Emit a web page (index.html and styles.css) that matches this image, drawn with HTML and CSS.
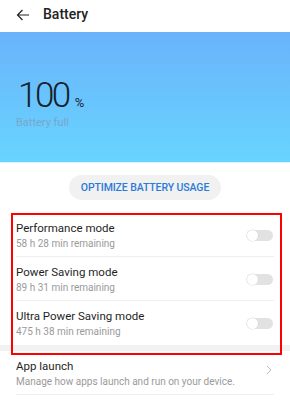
FILE: index.html
```html
<!DOCTYPE html>
<html>
<head>
<meta charset="utf-8">
<link rel="stylesheet" href="styles.css">
</head>
<body>
<div class="screen">
  <header class="topbar">
    <svg class="back" width="14" height="12" viewBox="0 0 14 12"><path d="M13 6H1.5M6.5 1L1.5 6l5 5" fill="none" stroke="#222" stroke-width="1.2"/></svg>
    <span class="title">Battery</span>
  </header>
  <section class="hero">
    <div class="level"><span class="num">100</span><span class="pct">%</span></div>
    <div class="status">Battery full</div>
  </section>
  <div class="action">
    <button class="optimize">OPTIMIZE BATTERY USAGE</button>
  </div>
  <section class="modes">
    <div class="row">
      <div class="text"><div class="name">Performance mode</div><div class="sub">58 h 28 min remaining</div></div>
      <span class="toggle"></span>
    </div>
    <div class="row">
      <div class="text"><div class="name">Power Saving mode</div><div class="sub">89 h 31 min remaining</div></div>
      <span class="toggle"></span>
    </div>
    <div class="row last">
      <div class="text"><div class="name">Ultra Power Saving mode</div><div class="sub">475 h 38 min remaining</div></div>
      <span class="toggle"></span>
    </div>
  </section>
  <section class="more">
    <div class="row link">
      <div class="text"><div class="name">App launch</div><div class="sub">Manage how apps launch and run on your device.</div></div>
      <svg class="chev" width="6" height="10" viewBox="0 0 6 10"><path d="M1 1l4 4-4 4" fill="none" stroke="#bbb" stroke-width="1"/></svg>
    </div>
  </section>
  <div class="highlight"></div>
</div>
</body>
</html>
```
FILE: styles.css
```css
* { box-sizing: border-box; }
html, body { margin: 0; padding: 0; background: #fff; }
body { font-family: Roboto, "Noto Sans", sans-serif; color: #1f1f1f; }
.screen { position: relative; width: 290px; height: 400px; overflow: hidden; }
.topbar { height: 32px; display: flex; align-items: center; padding-left: 16px; gap: 13px; }
.back { display: block; margin-top: -3px; }
.title { font-size: 14px; font-weight: 500; color: #222; margin-top: -4px; }
.hero { height: 131px; background: linear-gradient(#6ab3fb, #68d4fe); border-bottom: 1px solid #d8f3ff; padding: 46px 0 0 18px; }
.level { display: flex; align-items: baseline; height: 36px; }
.num { font-size: 35px; font-weight: 300; color: #16222e; letter-spacing: -2.5px; line-height: 36px; }
.pct { font-size: 13px; color: #1d2a36; margin-left: 6px; font-weight: 400; }
.status { font-size: 11px; color: #78a6cc; margin-top: 2px; margin-left: -2px; }
.action { height: 50px; display: flex; justify-content: center; padding-top: 12px; }
.optimize { border: 0; background: #f1f1f1; border-radius: 13px; height: 25px; padding: 0 12px; font-family: Roboto, sans-serif; font-weight: 500; font-size: 10.5px; color: #2a7ad8; letter-spacing: -0.1px; }
.modes { padding: 0 16px; border-bottom: 6px solid #f2f2f2; }
.row { height: 44px; display: flex; align-items: center; justify-content: space-between; border-bottom: 1px solid #eeeeee; padding-top: 1px; }
.row.last { border-bottom: 0; height: 44px; }
.name { font-size: 11.5px; color: #1f1f1f; line-height: 15px; }
.sub { font-size: 10px; color: #9a9a9a; line-height: 13px; margin-top: 1px; }
.toggle { width: 26px; height: 11px; border-radius: 6px; background: #e2e2e2; position: relative; margin-right: 1px; }
.toggle::before { content: ""; position: absolute; left: 0; top: 0; width: 11px; height: 11px; border-radius: 50%; background: #fff; box-shadow: 0 0 0 0.6px #d6d6d6; }
.more { padding: 0 16px; }
.row.link { height: 44px; }
.chev { margin-right: 2px; margin-top: -6px; }
.highlight { position: absolute; left: 11px; top: 213px; width: 271px; height: 142px; border: 2px solid #f00; pointer-events: none; }
```
